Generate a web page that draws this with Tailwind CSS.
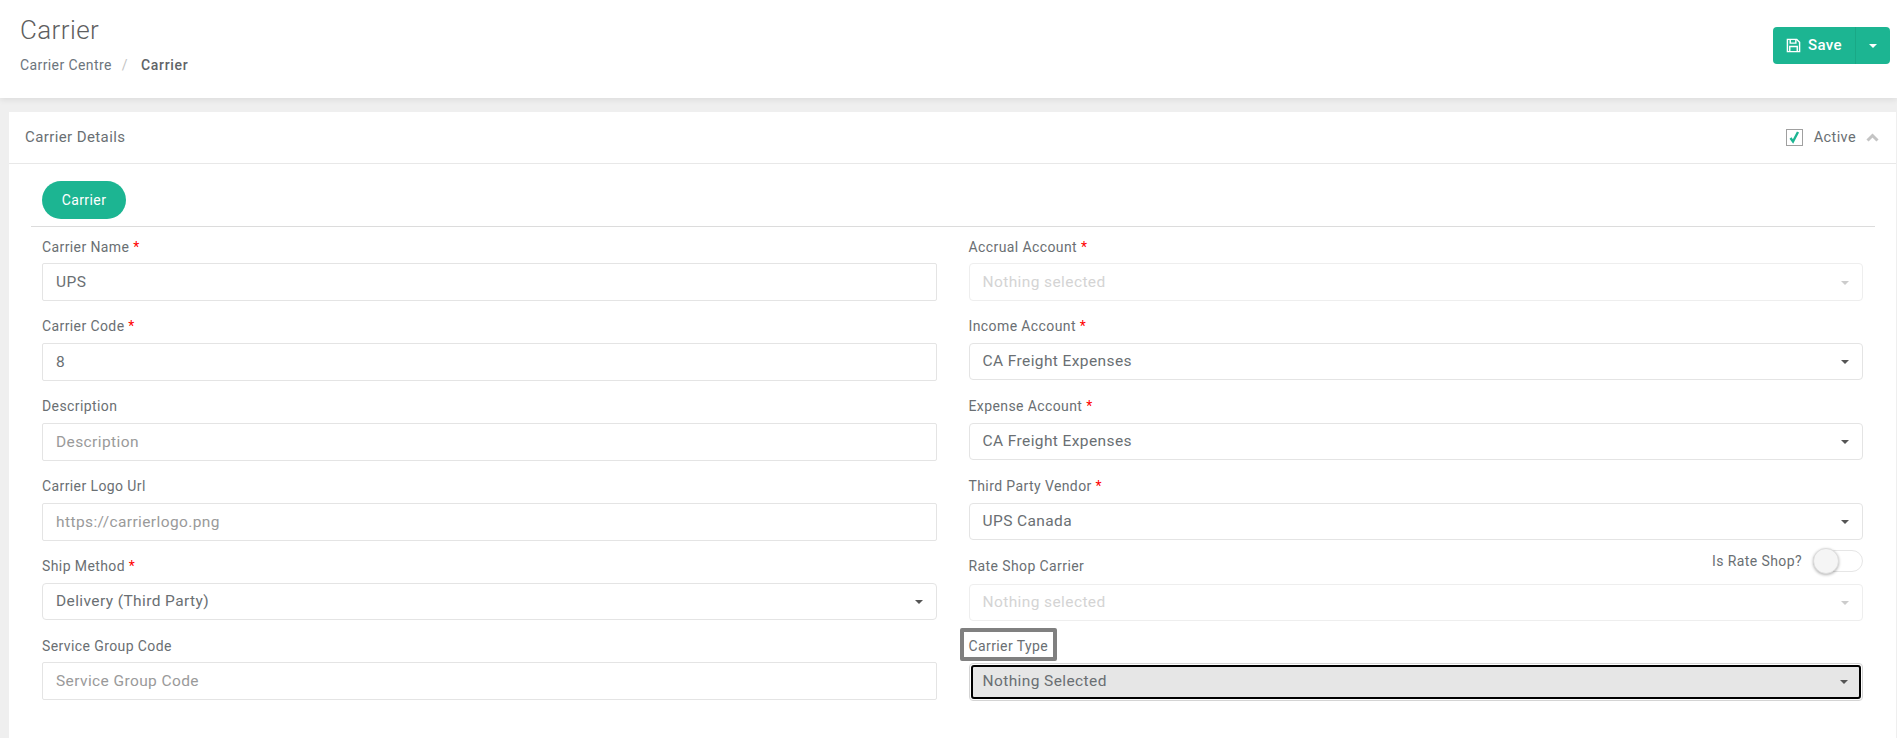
<!DOCTYPE html>
<html><head><meta charset="utf-8"><script src="https://cdn.jsdelivr.net/npm/@tailwindcss/browser@4"></script></head>
<body class="bg-[#efefef] font-['Roboto','Liberation_Sans',sans-serif] tracking-[0.4px] text-[#6c757d] overflow-hidden h-[738px]">
<header class="h-[98px] bg-white flex justify-between pl-5 pr-[7px] shadow-[0_2px_6px_rgba(0,0,0,0.08)] relative">
  <div>
    <h1 class="text-[26px] leading-[30px] mt-[15px] font-light text-[#5f5f5f]">Carrier</h1>
    <div class="flex items-center text-[14px] leading-5 mt-[10px] text-[#6c757d]">
      <span>Carrier Centre</span><span class="mx-[10px] text-[#c4c4c4]">/</span><span class="font-medium tracking-[0.7px] text-[#5f6468] ml-[3px]">Carrier</span>
    </div>
  </div>
  <div class="mt-[27px] h-[37px] w-[117px] flex bg-[#1cb592] rounded-[4px] text-white">
    <div class="w-[83px] flex items-center pl-[13px] gap-[7px] border-r border-[#19a886]">
      <svg width="15" height="15" viewBox="0 0 16 16" fill="none" stroke="white" stroke-width="1.5"><path d="M1.5 1.5h10l3 3v10h-13z"/><path d="M4.5 1.5v4h6v-4M4 14.5v-5.5h8v5.5"/></svg>
      <span class="text-[15px] font-medium">Save</span>
    </div>
    <div class="flex-1 flex items-center justify-center"><span class="w-0 h-0 border-x-[4px] border-x-transparent border-t-[4px] border-t-white"></span></div>
  </div>
</header>
<main class="mt-[14px] ml-[9px] mr-px bg-white h-[626px]">
  <div class="h-[52px] border-b border-[#e8e8e8] flex items-center justify-between pl-4 pr-[17px]">
    <span class="text-[15px] text-[#6a6f73]">Carrier Details</span>
    <div class="flex items-center">
      <span class="w-[17px] h-[17px] border border-[#a0a0a0] flex items-center justify-center mr-[11px]"><svg width="12" height="13" viewBox="0 0 12 13" fill="none" stroke="#1cb592" stroke-width="2.4"><path d="M2.5 7l2.5 3.5L10 1"/></svg></span>
      <span class="text-[14.5px] text-[#6a6f73]">Active</span>
      <svg class="ml-[10px]" width="13" height="9" viewBox="0 0 13 9" fill="none" stroke="#c4c4c4" stroke-width="3"><path d="M1.5 7.5l5-5 5 5"/></svg>
    </div>
  </div>
  <div class="pl-[22px] pr-[21px]">
    <div class="pt-[17px] pb-[7px] border-b border-[#dcdcdc]">
      <span class="ml-[11px] flex w-[84px] h-[38px] rounded-full bg-[#1cb592] text-white text-[14px] items-center justify-center">Carrier</span>
    </div>
    <div class="grid grid-cols-2 gap-x-[32px] px-[11px] text-[14px] w-[1843px] pr-[11px]">
      <div class="flex flex-col">
        <div class="h-[80px] pt-[9px]"><p class="h-[27px] leading-[22px] text-[#6a6f73]">Carrier Name <span class="text-[#f00]">*</span></p><input value="UPS" class="w-full h-[38px] border border-[#e4e4e4] rounded-[2px] px-[13px] text-[15.5px] text-[#6a6f73]"></div>
        <div class="h-[80px] pt-[9px]"><p class="h-[27px] leading-[21px] text-[#6a6f73]">Carrier Code <span class="text-[#f00]">*</span></p><input value="8" class="w-full h-[38px] border border-[#e4e4e4] rounded-[2px] px-[13px] text-[15.5px] text-[#6a6f73]"></div>
        <div class="h-[80px] pt-[9px]"><p class="h-[27px] leading-[21px] text-[#6a6f73]">Description</p><input placeholder="Description" class="w-full h-[38px] border border-[#e4e4e4] rounded-[2px] px-[13px] text-[15.5px] placeholder:text-[#9a9a9a]"></div>
        <div class="h-[80px] pt-[9px]"><p class="h-[27px] leading-[21px] text-[#6a6f73]">Carrier Logo Url</p><input placeholder="https://carrierlogo.png" class="w-full h-[38px] border border-[#e4e4e4] rounded-[2px] px-[13px] text-[15.5px] placeholder:text-[#9a9a9a]"></div>
        <div class="h-[79px] pt-[9px]"><p class="h-[27px] leading-[21px] text-[#6a6f73]">Ship Method <span class="text-[#f00]">*</span></p><div class="h-[37px] border border-[#e4e4e4] rounded-[4px] px-[13px] text-[15.5px] text-[#6a6f73] flex items-center justify-between"><span>Delivery (Third Party)</span><span class="w-0 h-0 border-x-[4px] border-x-transparent border-t-[4px] border-t-[#555]"></span></div></div>
        <div class="h-[80px] pt-[9px]"><p class="h-[27px] leading-[22px] text-[#6a6f73]">Service Group Code</p><input placeholder="Service Group Code" class="w-full h-[38px] border border-[#e4e4e4] rounded-[2px] px-[13px] text-[15.5px] placeholder:text-[#9a9a9a]"></div>
      </div>
      <div class="flex flex-col">
        <div class="h-[80px] pt-[9px]"><p class="h-[27px] leading-[22px] text-[#6a6f73]">Accrual Account <span class="text-[#f00]">*</span></p><div class="h-[38px] border border-[#eeeeee] rounded-[4px] px-[13px] pt-px text-[15.5px] text-[#d4d4d4] flex items-center justify-between"><span>Nothing selected</span><span class="w-0 h-0 border-x-[4px] border-x-transparent border-t-[4px] border-t-[#ccc]"></span></div></div>
        <div class="h-[80px] pt-[9px]"><p class="h-[27px] leading-[21px] text-[#6a6f73]">Income Account <span class="text-[#f00]">*</span></p><div class="h-[37px] border border-[#e4e4e4] rounded-[4px] px-[13px] pt-px text-[15.5px] text-[#6a6f73] flex items-center justify-between"><span>CA Freight Expenses</span><span class="w-0 h-0 border-x-[4px] border-x-transparent border-t-[4px] border-t-[#555]"></span></div></div>
        <div class="h-[80px] pt-[9px]"><p class="h-[27px] leading-[21px] text-[#6a6f73]">Expense Account <span class="text-[#f00]">*</span></p><div class="h-[37px] border border-[#e4e4e4] rounded-[4px] px-[13px] pt-px text-[15.5px] text-[#6a6f73] flex items-center justify-between"><span>CA Freight Expenses</span><span class="w-0 h-0 border-x-[4px] border-x-transparent border-t-[4px] border-t-[#555]"></span></div></div>
        <div class="h-[80px] pt-[9px]"><p class="h-[27px] leading-[21px] text-[#6a6f73]">Third Party Vendor <span class="text-[#f00]">*</span></p><div class="h-[37px] border border-[#e4e4e4] rounded-[4px] px-[13px] text-[15.5px] text-[#6a6f73] flex items-center justify-between"><span>UPS Canada</span><span class="w-0 h-0 border-x-[4px] border-x-transparent border-t-[4px] border-t-[#555]"></span></div></div>
        <div class="h-[80px] pt-[9px] relative"><p class="h-[28px] leading-[21px] text-[#6a6f73]">Rate Shop Carrier</p>
          <div class="absolute right-0 top-[3px] flex items-center"><span class="text-[14px] text-[#6a6f73] mr-[11px]">Is Rate Shop?</span><span class="relative block w-[50px] h-[22px] border border-[#e6e6e6] rounded-full"><span class="absolute left-[-1px] top-[-3px] w-[26px] h-[26px] rounded-full bg-[#f5f5f5] border border-[#ddd] shadow-[0_1px_3px_rgba(0,0,0,0.3)]"></span></span></div>
          <div class="h-[37px] border border-[#eeeeee] rounded-[4px] px-[13px] pt-px text-[15.5px] text-[#d4d4d4] flex items-center justify-between"><span>Nothing selected</span><span class="w-0 h-0 border-x-[4px] border-x-transparent border-t-[4px] border-t-[#ccc]"></span></div></div>
        <div class="h-[80px] pt-[9px] relative"><p class="h-[27px] leading-[21px] text-[#6a6f73]">Carrier Type</p>
          <span class="absolute left-[-9px] top-[1px] w-[97px] h-[33px] border-[4px] border-[#808080] rounded-[2px]"></span>
          <div class="h-[38px] border border-[#d4d4d4] rounded-[4px] p-px"><div class="h-full border-[2px] border-black rounded-[3px] bg-[#e6e6e6] pl-[10px] pr-[11px] text-[15.5px] text-[#6a6f73] flex items-center justify-between"><span>Nothing Selected</span><span class="w-0 h-0 border-x-[4px] border-x-transparent border-t-[4px] border-t-[#555]"></span></div></div></div>
      </div>
    </div>
  </div>
</main>
</body></html>
